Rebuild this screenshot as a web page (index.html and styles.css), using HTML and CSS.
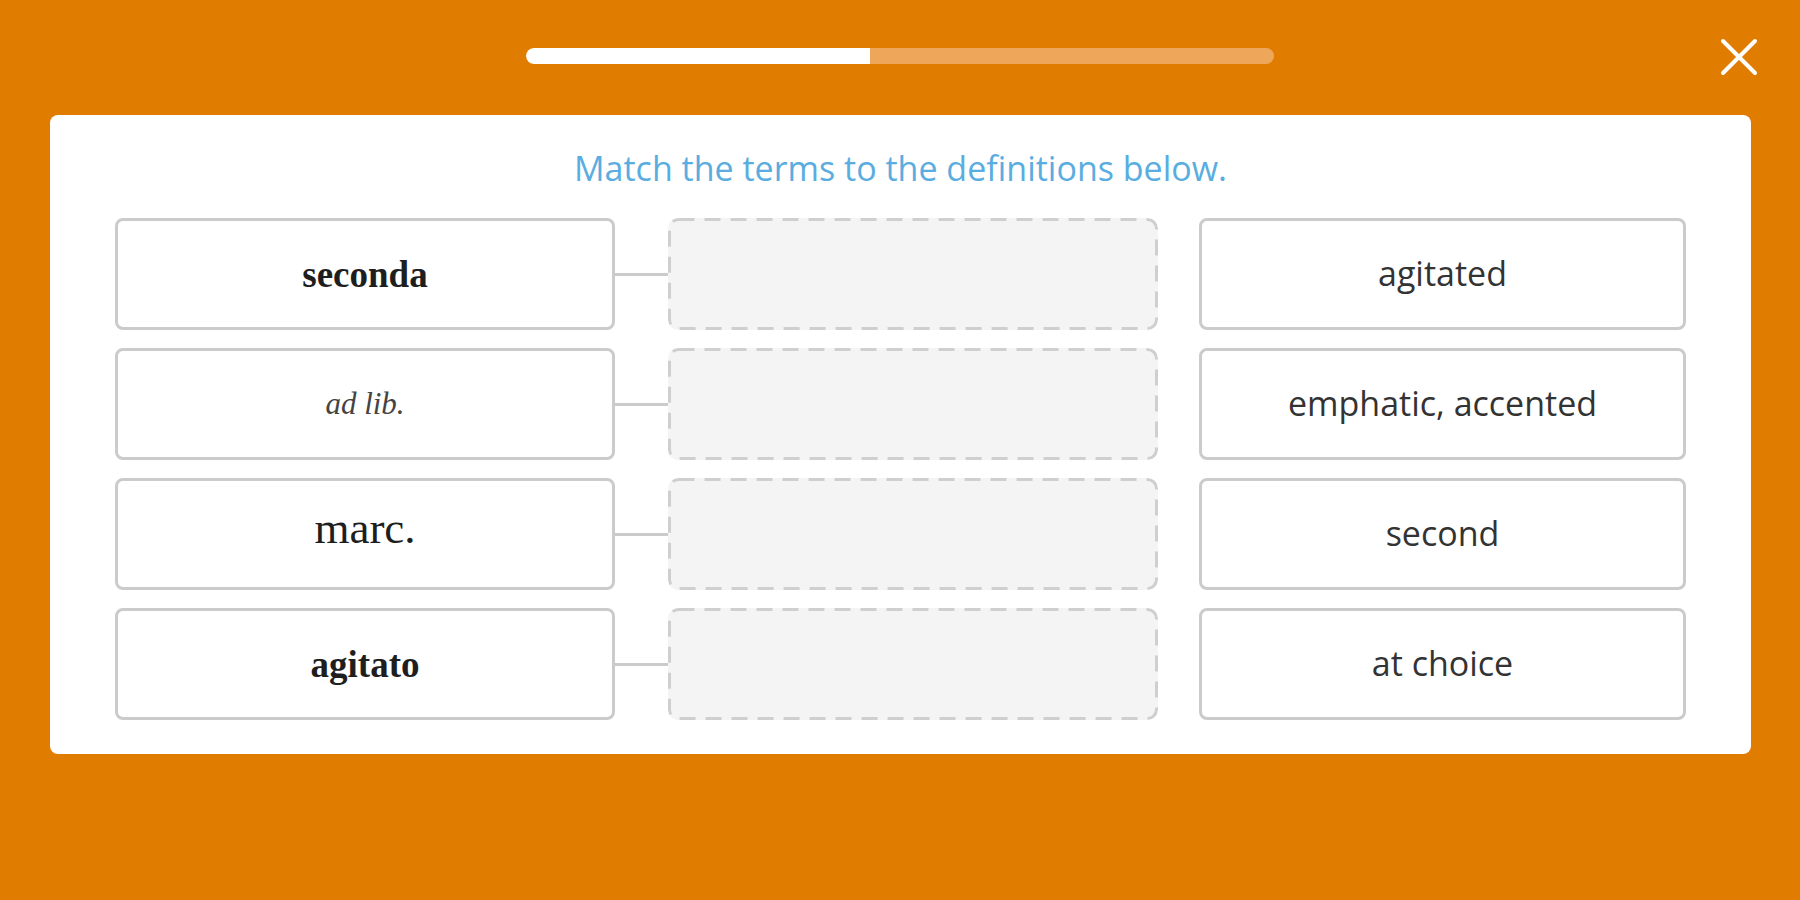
FILE: index.html
```html
<!DOCTYPE html>
<html lang="en">
<head>
    <meta charset="UTF-8">
    <title>Match the terms</title>
    <link rel="stylesheet" href="styles.css">
</head>
<body>
    <div class="topbar">
        <div></div>
        <div class="progress">
            <div class="progress-fill" style="width: 46%;"></div>
        </div>
        <button class="close" aria-label="Close">
            <svg width="38" height="38" viewBox="0 0 38 38">
                <path d="M3 3 L35 35 M35 3 L3 35" stroke="#fff" stroke-width="4" stroke-linecap="round" fill="none"/>
            </svg>
        </button>
    </div>

    <div class="card">
        <h1 class="prompt">Match the terms to the definitions below.</h1>

        <div class="board">
            <!-- terms with their empty drop slots -->
            <div class="pairs">
                <div class="pair">
                    <div class="term term-bold">seconda</div>
                    <div class="link"></div>
                    <div class="slot"></div>
                </div>
                <div class="pair">
                    <div class="term term-italic">ad lib.</div>
                    <div class="link"></div>
                    <div class="slot"></div>
                </div>
                <div class="pair">
                    <div class="term term-large">marc.</div>
                    <div class="link"></div>
                    <div class="slot"></div>
                </div>
                <div class="pair">
                    <div class="term term-bold">agitato</div>
                    <div class="link"></div>
                    <div class="slot"></div>
                </div>
            </div>

            <!-- definitions to drag -->
            <div class="definitions">
                <div class="definition">agitated</div>
                <div class="definition">emphatic, accented</div>
                <div class="definition">second</div>
                <div class="definition">at choice</div>
            </div>
        </div>
    </div>
</body>
</html>
```

FILE: styles.css
```css
body {
    margin: 0;
    padding: 0;
    background-color: #e07c00;
    font-family: "Open Sans", Lato, sans-serif;
    height: 900px;
}

.topbar {
    display: grid;
    grid-template-columns: 1fr 748px 1fr;
    align-items: center;
    height: 115px;
    padding-bottom: 2px;
    box-sizing: border-box;
}

.progress {
    height: 16px;
    border-radius: 8px;
    background-color: #eda65a;
    overflow: hidden;
    margin-top: -1px;
}

.progress-fill {
    height: 100%;
    background-color: #fff;
    border-radius: 8px 0 0 8px;
}

.close {
    justify-self: end;
    margin-right: 42px;
    padding: 0;
    border: none;
    background: none;
    width: 38px;
    height: 38px;
    cursor: pointer;
}

.card {
    margin: 0 49px 0 50px;
    background-color: #fff;
    border-radius: 8px;
    padding: 31px 65px 34px;
}

.prompt {
    margin: 0 0 28px;
    text-align: center;
    font-size: 34px;
    line-height: 44px;
    font-weight: normal;
    color: #5aade0;
}

.board {
    display: flex;
}

.pairs,
.definitions {
    display: flex;
    flex-direction: column;
    gap: 18px;
}

.pair {
    display: flex;
    align-items: center;
}

.term,
.definition {
    height: 112px;
    box-sizing: border-box;
    border: 3px solid #cbcbcb;
    border-radius: 8px;
    display: flex;
    align-items: center;
    justify-content: center;
    background-color: #fff;
}

.term {
    width: 500px;
    font-family: "Liberation Serif", serif;
    color: #1e1e1e;
}

.term-bold {
    font-weight: bold;
    font-size: 37px;
}

.term-italic {
    font-style: italic;
    font-size: 31px;
    color: #444;
}

.term-large {
    font-size: 45px;
    padding-bottom: 12px;
}

.link {
    width: 53px;
    height: 3px;
    background-color: #cbcbcb;
}

.slot {
    width: 490px;
    height: 112px;
    box-sizing: border-box;
    border-radius: 10px;
    background-color: #f4f4f4;
    background-image: url("data:image/svg+xml,%3Csvg xmlns='http://www.w3.org/2000/svg' width='100%25' height='100%25'%3E%3Crect x='1.5' y='1.5' width='487' height='109' rx='9' fill='none' stroke='%23cfcfcf' stroke-width='3' stroke-dasharray='16 10'/%3E%3C/svg%3E");
}

.definitions {
    margin-left: 41px;
    width: 487px;
}

.definition {
    font-size: 34px;
    color: #333;
    padding-bottom: 2px;
}
```
